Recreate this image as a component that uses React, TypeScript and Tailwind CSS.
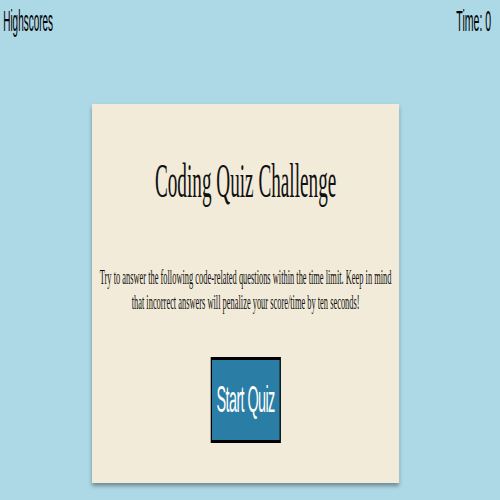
export default function App() {
  return (
    <div className="w-[500px] h-[500px] overflow-hidden bg-[#add8e6]">
      {/* the reference is squeezed sideways, so lay out at 1250px and compress */}
      <div className="w-[1250px] h-[500px] origin-top-left scale-x-[0.4]">
        <header className="flex justify-between pt-[4px] pl-[8px] pr-[22px] text-[30px] leading-[34px] text-black font-['Liberation_Sans',Arial,sans-serif]">
          <a className="cursor-pointer origin-left scale-x-[0.83]">Highscores</a>
          <span className="origin-right scale-x-[0.88]">Time: 0</span>
        </header>

        <main className="ml-[230px] mt-[66px] w-[768px] bg-[#f3ebd9] shadow-[0_3px_6px_rgba(0,0,0,0.35)] pt-[49px] pb-[40px] px-[4px] flex flex-col items-center text-center font-['Liberation_Serif','Times_New_Roman',serif] text-[#111]">
          <h1 className="text-[48px] leading-[55px] font-normal">Coding Quiz Challenge</h1>
          <p className="mt-[57px] text-[21px] leading-[25px]">
            Try to answer the following code-related questions within the time limit. Keep in mind that incorrect answers will penalize your score/time by ten seconds!
          </p>
          <button className="mt-[42px] w-[175px] h-[86px] bg-[#2a7ea6] border-[3px] border-black text-white text-[36px] tracking-[-1.5px] font-['Liberation_Sans',Arial,sans-serif]">
            Start Quiz
          </button>
        </main>
      </div>
    </div>
  );
}
